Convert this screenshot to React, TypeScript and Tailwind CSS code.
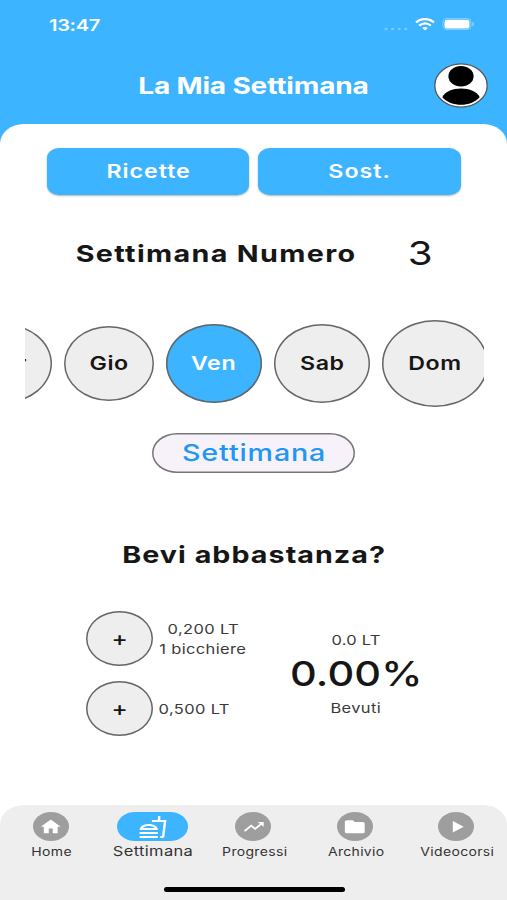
import type { IconType } from 'react-icons'
import { MdFolder, MdHome, MdOutlineFastfood, MdPlayArrow, MdTrendingUp } from 'react-icons/md'

const days = [
  { label: 'Gio', size: 'w-[90px] h-[75px]' },
  { label: 'Ven', size: 'w-[96px] h-[79px]', active: true },
  { label: 'Sab', size: 'w-[96px] h-[79px]' },
  { label: 'Dom', size: 'w-[106px] h-[87px]' },
]

const tabs: { label: string; icon: IconType; active?: boolean }[] = [
  { label: 'Home', icon: MdHome },
  { label: 'Settimana', icon: MdOutlineFastfood, active: true },
  { label: 'Progressi', icon: MdTrendingUp },
  { label: 'Archivio', icon: MdFolder },
  { label: 'Videocorsi', icon: MdPlayArrow },
]

// Wide text, scaled horizontally around its own box
function Wide({ children, className = '' }: { children: string; className?: string }) {
  return <span className={`block whitespace-nowrap scale-x-[1.22] ${className}`}>{children}</span>
}

function StatusBar() {
  return (
    <div className="h-[48px] pl-[49px] pr-[32px] flex items-center justify-between">
      <Wide className="origin-left mt-[2px] text-[16.5px] font-semibold tracking-[-0.3px]">13:47</Wide>
      <div className="flex items-center">
        <svg width="24" height="4" viewBox="0 0 24 4" className="mt-[9px] mr-[7px]" fill="#fff" opacity="0.3">
          {[2, 8.6, 15.2, 21.8].map((x) => (
            <ellipse key={x} cx={x} cy="2" rx="1.6" ry="1.3" />
          ))}
        </svg>
        <svg width="20" height="13" viewBox="0 0 20 13" fill="none" stroke="#fff" strokeWidth="2.2">
          <path d="M1 4.4C6 -0.1 14 -0.1 19 4.4" />
          <path d="M4.2 7.6C7.6 4.6 12.4 4.6 15.8 7.6" />
          <path d="M10 12.4L7.2 10.1C8.8 8.7 11.2 8.7 12.8 10.1Z" fill="#fff" stroke="none" />
        </svg>
        <svg width="33" height="14" viewBox="0 0 33 14" className="ml-[7px]">
          <rect x="1" y="1.5" width="28" height="11" rx="3.5" fill="none" stroke="#fff" strokeOpacity="0.35" />
          <rect x="2.5" y="2.8" width="25" height="8.6" rx="2.2" fill="#fff" />
          <path d="M30.3 4.8C32.6 5.6 32.6 8.6 30.3 9.4Z" fill="#fff" opacity="0.4" />
        </svg>
      </div>
    </div>
  )
}

function Avatar() {
  return (
    <svg width="54" height="45" viewBox="0 0 54 45" className="absolute right-[19px] top-[15px]">
      <ellipse cx="27" cy="22.5" rx="26.2" ry="21.7" fill="#fff" stroke="#555" strokeWidth="1.3" />
      <ellipse cx="27" cy="13.3" rx="12.6" ry="10.3" />
      <path d="M8.3 34.2C13 22.6 41 22.6 45.7 34.2C37 44.2 17 44.2 8.3 34.2Z" />
    </svg>
  )
}

function WaterRow({ lines }: { lines: string[] }) {
  return (
    <div className="flex items-center h-[70px]">
      <button className="w-[67px] h-[55px] shrink-0 rounded-[50%] shadow-[inset_0_0_0_1.5px_#666] bg-[#eee] flex items-center justify-center">
        <Wide className="ml-px mt-px text-[20px] leading-[24px] font-medium">+</Wide>
      </button>
      <div className={`ml-[7px] pt-[2px] flex flex-col items-center text-[#3a3a3a] ${lines.length > 1 ? 'w-[86px]' : 'w-[69px]'}`}>
        {lines.map((line) => (
          <Wide key={line} className="text-[13.5px] leading-[20px] tracking-[0.3px]">{line}</Wide>
        ))}
      </div>
    </div>
  )
}

function TabBar() {
  return (
    <nav className="h-[95px] bg-[#eee] [border-radius:24px_24px_0_0/20px_20px_0_0] flex flex-col items-center">
      <div className="w-full grid grid-cols-5 pt-[7px]">
        {tabs.map(({ label, icon: Icon, active }) => (
          <div key={label} className="flex flex-col items-center text-[#333]">
            <div
              className={`h-[29px] flex items-center justify-center text-white ${
                active ? 'w-[71px] [border-radius:18px/14.5px] bg-[#3cb4ff]' : 'w-[36px] rounded-[50%] bg-[#9e9e9e]'
              }`}
            >
              <Icon className={`scale-x-[1.22] ${active ? 'ml-px size-[24px]' : 'size-[19.5px]'}`} />
            </div>
            {active ? (
              <Wide className="ml-[2px] text-[13.5px] leading-[20px] tracking-[0.3px]">{label}</Wide>
            ) : (
              <Wide className="ml-[2px] mt-[2px] text-[11.5px] leading-[18px] tracking-[0.25px]">{label}</Wide>
            )}
          </div>
        ))}
      </div>
      <div className="mt-auto mb-[8px] ml-px w-[181px] h-[5px] rounded-full bg-black" />
    </nav>
  )
}

export default function App() {
  return (
    <div className="w-[507px] h-[900px] overflow-hidden flex flex-col bg-[#3cb4ff] font-['Inter',sans-serif] text-[#161616]">
      <header className="h-[124px] shrink-0 text-white">
        <StatusBar />
        <div className="relative h-[76px] flex justify-center pt-[21px]">
          <Wide className="text-[23px] leading-[34px] font-bold tracking-[-0.15px]">La Mia Settimana</Wide>
          <Avatar />
        </div>
      </header>

      <main className="flex-1 bg-white [border-radius:24px_24px_0_0/20px_20px_0_0] flex flex-col">
        <div className="mt-[24px] px-[46.5px] grid grid-cols-2 gap-[9px]">
          {['Ricette', 'Sost.'].map((label) => (
            <button
              key={label}
              className="h-[47px] [border-radius:12px/10px] bg-[#3cb4ff] text-white shadow-[0_1px_2px_rgba(0,0,0,0.3)] flex items-center justify-center"
            >
              <Wide className="mt-px ml-px text-[19px] font-semibold tracking-[0.8px]">{label}</Wide>
            </button>
          ))}
        </div>

        <div className="mt-[39px] h-[40px] flex items-center">
          <div className="ml-[76px] w-[280px] flex justify-center">
            <Wide className="text-[23.5px] font-bold tracking-[1.1px]">Settimana Numero</Wide>
          </div>
          <div className="ml-[53px] w-[23px] flex justify-center">
            <Wide className="text-[33px]">3</Wide>
          </div>
        </div>

        {/* Day picker, scrolled to the end of the week */}
        <div className="mt-[46px] ml-[25px] w-[459px] h-[87px] overflow-hidden flex items-center justify-start">
          <div className="-ml-[69px] w-[96px] h-[79px] shrink-0 rounded-[50%] shadow-[inset_0_0_0_1.5px_#666] bg-[#eee] flex items-center justify-center">
            <Wide className="mt-px text-[19px] font-semibold tracking-[0.5px]">Mer</Wide>
          </div>
          {days.map(({ label, size, active }) => (
            <div
              key={label}
              className={`ml-[12px] shrink-0 rounded-[50%] shadow-[inset_0_0_0_1.5px_#666] flex items-center justify-center ${size} ${
                active ? 'bg-[#3cb4ff] text-white' : 'bg-[#eee]'
              }`}
            >
              <Wide className="mt-[2px] text-[19px] font-semibold tracking-[0.5px]">{label}</Wide>
            </div>
          ))}
        </div>

        <button className="mt-[26px] mx-auto w-[203px] h-[40px] [border-radius:25px/20px] shadow-[inset_0_0_0_1.5px_#777] bg-[#f7f2fa] text-[#2196f3] flex items-center justify-center">
          <Wide className="ml-px text-[23.5px] font-medium tracking-[0.7px]">Settimana</Wide>
        </button>

        <div className="mt-[64px] h-[36px] flex items-center justify-center">
          <Wide className="ml-[2px] text-[23.5px] font-bold tracking-[0.85px]">Bevi abbastanza?</Wide>
        </div>

        <div className="mt-[30px] flex">
          <div className="ml-[86px]">
            <WaterRow lines={['0,200 LT', '1 bicchiere']} />
            <WaterRow lines={['0,500 LT']} />
          </div>
          <div className="w-[130px] ml-[45px] pt-[27px] flex flex-col items-center">
            <Wide className="text-[13.5px] leading-[20px] tracking-[0.2px] text-[#3a3a3a]">0.0 LT</Wide>
            <Wide className="text-[34px] leading-[48px] font-[450] tracking-[0.1px]">0.00%</Wide>
            <Wide className="text-[13.5px] leading-[20px] tracking-[0.3px] text-[#3a3a3a]">Bevuti</Wide>
          </div>
        </div>

        <div className="mt-auto">
          <TabBar />
        </div>
      </main>
    </div>
  )
}
